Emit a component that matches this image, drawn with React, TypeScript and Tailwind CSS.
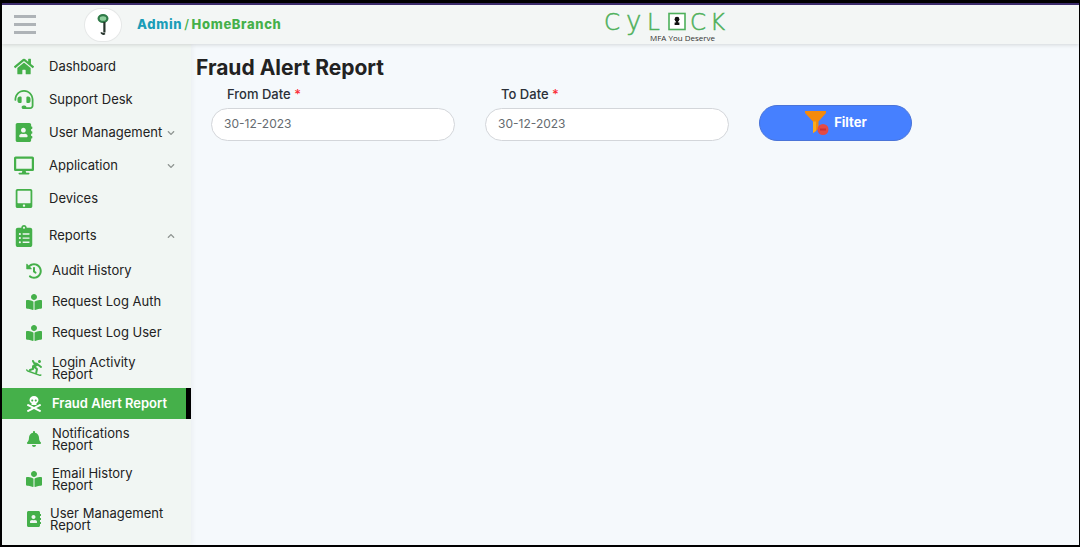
import { useState } from 'react';
import type { ComponentType } from 'react';
import {
  FaAddressBook,
  FaBell,
  FaBookReader,
  FaChevronDown,
  FaChevronUp,
  FaClipboardList,
  FaDesktop,
  FaHeadset,
  FaHistory,
  FaHome,
  FaSkullCrossbones,
  FaSnowboarding,
  FaTabletAlt,
} from 'react-icons/fa';

type Icon = ComponentType<{ className?: string }>;

interface NavEntry {
  label: string;
  icon: Icon;
  expandable?: boolean;
}

interface ReportEntry {
  label: string;
  icon: Icon;
  /** Long labels wrap onto two tight lines. */
  wraps?: boolean;
  /** Wider label column, for a long first line. */
  wide?: boolean;
}

const NAV: NavEntry[] = [
  { label: 'Dashboard', icon: FaHome },
  { label: 'Support Desk', icon: FaHeadset },
  { label: 'User Management', icon: FaAddressBook, expandable: true },
  { label: 'Application', icon: FaDesktop, expandable: true },
  { label: 'Devices', icon: FaTabletAlt },
];

const REPORTS: ReportEntry[] = [
  { label: 'Audit History', icon: FaHistory },
  { label: 'Request Log Auth', icon: FaBookReader },
  { label: 'Request Log User', icon: FaBookReader },
  { label: 'Login Activity Report', icon: FaSnowboarding, wraps: true },
  { label: 'Fraud Alert Report', icon: FaSkullCrossbones },
  { label: 'Notifications Report', icon: FaBell, wraps: true },
  { label: 'Email History Report', icon: FaBookReader, wraps: true },
  { label: 'User Management Report', icon: FaAddressBook, wraps: true, wide: true },
];

function KeyAvatar() {
  return (
    <span className="flex h-8 w-9 items-center justify-center rounded-full bg-white ring-1 ring-[#e6e8e8]">
      <svg viewBox="0 0 16 24" className="h-6 w-4" fill="none">
        <ellipse cx="8" cy="5.5" rx="4.4" ry="3.4" fill="#8fcf9d" stroke="#2f7a48" strokeWidth="2.2" />
        <path d="M9.4 9V19.5" stroke="#26332b" strokeWidth="2.2" />
        <path d="M9.8 20.2C8.6 21.4 7 21 6.2 19.4" stroke="#26332b" strokeWidth="2" />
      </svg>
    </span>
  );
}

function Logo() {
  return (
    <svg viewBox="0 0 124 39" className="h-[39px] w-[124px]" role="img" aria-label="Cylock">
      <g
        fill="#4db05b"
        stroke="#4db05b"
        strokeWidth="0.5"
        fontFamily="'DejaVu Sans', sans-serif"
        fontWeight="200"
      >
        <text x="0" y="25" fontSize="23">C</text>
        <text x="22" y="25" fontSize="26">y</text>
        <text x="43" y="25" fontSize="23">L</text>
        <text x="86" y="25" fontSize="23">C</text>
        <text x="106" y="25" fontSize="23">K</text>
      </g>
      <rect x="65" y="8.5" width="16" height="16" fill="#fff" stroke="#4db05b" strokeWidth="1.6" />
      <circle cx="73" cy="14.2" r="2.4" fill="#111" />
      <path d="M71.8 14H74.2V17.5H75.4V20H70.6V17.5H71.8Z" fill="#111" />
      <text x="46" y="36" fontSize="8" fill="#333" fontFamily="'Open Sans', sans-serif">
        MFA You Deserve
      </text>
    </svg>
  );
}

function FilterIcon() {
  return (
    <svg viewBox="0 0 26 26" className="h-[26px] w-[26px]">
      <path d="M1 1H22V3L14.5 11.5V19L9 23V11.5L1 3Z" fill="#f58a0b" />
      <path d="M9 11.5H12V21L9 23Z" fill="#fbab1c" />
      <circle cx="19" cy="19.5" r="5.5" fill="#e34a44" />
      <path d="M16 19.5H22" stroke="#c92f35" strokeWidth="2" />
    </svg>
  );
}

function NavRow({ entry }: { entry: NavEntry }) {
  const EntryIcon = entry.icon;
  return (
    <button className="flex h-[33px] w-full items-center pr-4 pl-3 text-left">
      <EntryIcon className="h-[19px] w-5 shrink-0 text-[#45b04a]" />
      <span className="ml-[15px] flex-1 whitespace-nowrap">{entry.label}</span>
      {entry.expandable && <FaChevronDown className="h-2 w-2 text-[#8f9592]" />}
    </button>
  );
}

interface ReportRowProps {
  entry: ReportEntry;
  active: boolean;
  onSelect: () => void;
}

function ReportRow({ entry, active, onSelect }: ReportRowProps) {
  const EntryIcon = entry.icon;
  const labelClass = entry.wide ? 'ml-2 w-[120px]' : entry.wraps ? 'ml-2.5 w-28' : 'ml-2.5 whitespace-nowrap';
  return (
    <button
      onClick={onSelect}
      className={`flex w-full items-center pl-6 text-left ${entry.wraps ? 'h-10 leading-3' : 'h-[31px]'} ${
        active ? 'border-r-[5px] border-black bg-[#45b04a] font-semibold text-white' : ''
      }`}
    >
      <EntryIcon className={`h-4 w-4 shrink-0 ${active ? 'text-white' : 'text-[#45b04a]'}`} />
      <span className={labelClass}>{entry.label}</span>
    </button>
  );
}

function DateField({ id, label }: { id: string; label: string }) {
  const [value, setValue] = useState('30-12-2023');
  return (
    <div>
      <label htmlFor={id} className="block pl-4 text-[13px] leading-5 font-medium text-[#2b3038]">
        {label} <span className="text-red-500">*</span>
      </label>
      <input
        id={id}
        type="text"
        value={value}
        onChange={(e) => setValue(e.target.value)}
        className="mt-1 h-[33px] w-full rounded-full border border-[#d3d6da] bg-white px-3 pb-0.5 text-[12px] text-[#666b70] outline-none"
      />
    </div>
  );
}

export default function App() {
  const [reportsOpen, setReportsOpen] = useState(true);
  const [active, setActive] = useState('Fraud Alert Report');

  return (
    <div className="flex min-h-screen flex-col border-t-[3px] border-r border-b-2 border-l-2 border-black bg-[#f5f9fc] font-['Inter',sans-serif] text-[13px] text-[#222]">
      <header className="relative z-10 grid h-[41px] shrink-0 grid-cols-[12fr_auto_7fr] items-center border-t-2 border-[#3b2c6b] bg-[#f3f6f5] shadow-[0_1px_4px_rgba(0,0,0,0.14)]">
        <div className="flex items-center">
          <button aria-label="Toggle menu" className="ml-3 flex w-[22px] flex-col gap-[5px]">
            <span className="h-[3px] bg-[#aeb3b7]" />
            <span className="h-[3px] bg-[#aeb3b7]" />
            <span className="h-[3px] bg-[#aeb3b7]" />
          </button>
          <span className="ml-[49px]">
            <KeyAvatar />
          </span>
          <nav className="ml-4 text-[13px] font-extrabold tracking-wider whitespace-nowrap">
            <a href="#" className="text-[#1a9db8]">Admin</a>
            <span className="px-0.5 font-medium text-[#45b04a]">/</span>
            <a href="#" className="text-[#45b04a]">HomeBranch</a>
          </nav>
        </div>
        <Logo />
      </header>

      <div className="flex flex-1">
        <aside className="w-[189px] shrink-0 bg-[#f1f6f3] pt-1.5 shadow-[1px_0_6px_rgba(0,0,0,0.05)]">
          {NAV.map((entry) => (
            <NavRow key={entry.label} entry={entry} />
          ))}
          <button
            onClick={() => setReportsOpen(!reportsOpen)}
            aria-expanded={reportsOpen}
            className="flex h-10 w-full items-center pt-0.5 pr-4 pl-3 text-left"
          >
            <FaClipboardList className="h-[22px] w-5 shrink-0 text-[#45b04a]" />
            <span className="ml-[15px] flex-1">Reports</span>
            {reportsOpen ? (
              <FaChevronUp className="h-2 w-2 text-[#8f9592]" />
            ) : (
              <FaChevronDown className="h-2 w-2 text-[#8f9592]" />
            )}
          </button>
          {reportsOpen &&
            REPORTS.map((entry) => (
              <ReportRow
                key={entry.label}
                entry={entry}
                active={entry.label === active}
                onSelect={() => setActive(entry.label)}
              />
            ))}
        </aside>

        <main className="min-w-0 flex-1 pt-2.5">
          <h1 className="pl-[5px] text-[21px] leading-7 font-bold text-[#222]">Fraud Alert Report</h1>
          <form
            onSubmit={(e) => e.preventDefault()}
            className="mt-0.5 grid grid-cols-[16fr_16fr_10fr_9fr] items-end gap-[30px] pl-5"
          >
            <DateField id="from-date" label="From Date" />
            <DateField id="to-date" label="To Date" />
            <button className="flex h-9 items-center justify-center gap-1 rounded-full border border-[#4a74d8] bg-[#4680ff] text-[13px] font-bold text-white">
              <FilterIcon />
              Filter
            </button>
          </form>
        </main>
      </div>
    </div>
  );
}
